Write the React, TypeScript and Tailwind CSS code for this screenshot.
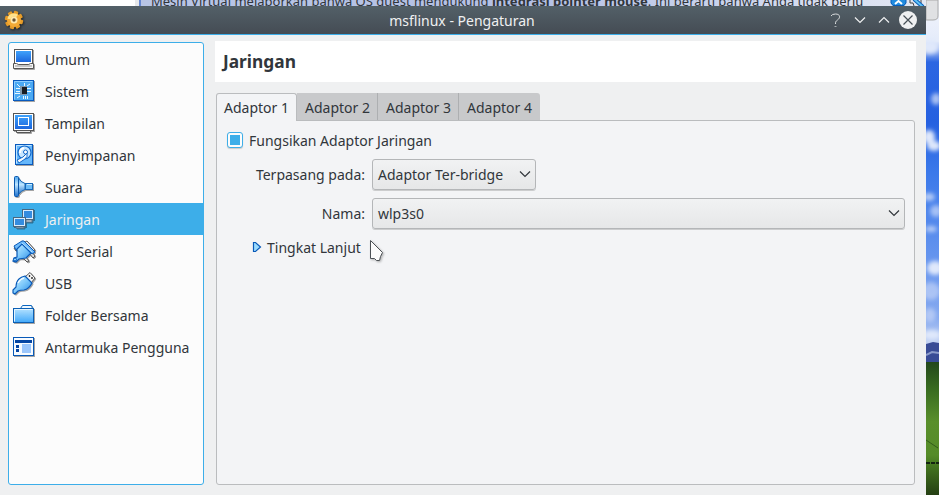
import React from "react";

const S = ({ children }: { children: React.ReactNode }) => (
  <svg width="24" height="24" viewBox="0 0 24 24" className="block shrink-0 drop-shadow-[1px_1px_0.5px_rgba(0,0,0,0.35)]">
    <defs>
      <linearGradient id="screen" x1="0" y1="0" x2="0" y2="1">
        <stop offset="0" stopColor="#3fa2fb" />
        <stop offset="1" stopColor="#1b66dd" />
      </linearGradient>
      <linearGradient id="light" x1="0" y1="0" x2="1" y2="1">
        <stop offset="0" stopColor="#d5f1ff" />
        <stop offset="0.500" stopColor="#7cc8fb" />
        <stop offset="1" stopColor="#2585e2" />
      </linearGradient>
      <linearGradient id="cone" x1="0" y1="0" x2="0" y2="1">
        <stop offset="0" stopColor="#4ba4ee" />
        <stop offset="0.400" stopColor="#bfe6ff" />
        <stop offset="1" stopColor="#1c70cd" />
      </linearGradient>
      <linearGradient id="folder" x1="0" y1="0" x2="0" y2="1">
        <stop offset="0" stopColor="#b5e2ff" />
        <stop offset="1" stopColor="#42a9fa" />
      </linearGradient>
    </defs>
    {children}
  </svg>
);

const General = () => (
  <S>
    <rect x="2.500" y="1.500" width="18" height="15" fill="#fff" stroke="#555" />
    <rect x="4" y="3" width="15" height="11" fill="url(#screen)" />
    <path d="M1.500 15.500h3l2 1h10l2-1h3v5h-20z" fill="#f4f4f4" stroke="#555" />
    <path d="M3 17h17v2H3z" fill="#c4c4c4" />
  </S>
);
const System = () => (
  <S>
    <rect x="1.500" y="0.500" width="20" height="20" fill="#4ba9f3" stroke="#0859bd" />
    <path d="M2.500 19.500v-18h18" fill="none" stroke="#8dcdff" />
    <path d="M4 8.500h4M4 11.500h4M3 13.500h5M15 8.500h4M15 11.500h4M11.500 16v3M13.500 16v3M15.500 16v3M12.500 3v3M15 6l3-2M5 18l3-2M5 4l3 3" stroke="#e7f6ff" />
    <rect x="8" y="6" width="7" height="9" fill="#8098ac" />
    <rect x="10" y="7" width="5" height="7" fill="#181d23" />
  </S>
);
const Display = () => (
  <S>
    <path d="M4.500 18.500h14v2h-14z" fill="#eee" stroke="#555" />
    <rect x="1.500" y="1.500" width="20" height="17" fill="#fff" stroke="#555" />
    <rect x="3" y="3" width="17" height="14" fill="url(#screen)" />
    <rect x="6.500" y="5.500" width="10" height="8" fill="none" stroke="#fff" />
  </S>
);
const Storage = () => (
  <S>
    <rect x="3.500" y="0.500" width="17" height="20" fill="#65b7fb" stroke="#0859bd" />
    <path d="M4.500 19.500v-18h15" fill="none" stroke="#bfe4ff" />
    <circle cx="12.500" cy="8.500" r="6.500" fill="#c7e6ff" stroke="#1268ca" strokeWidth="1.200" />
    <path d="M8 9a5 5 0 0 1 4-5" fill="none" stroke="#fff" strokeWidth="2" />
    <circle cx="13.500" cy="8" r="2" fill="#fff" stroke="#1268ca" />
    <path d="M15 9q1 4-2 6l-6 4-2-3 6-3z" fill="#f4faff" stroke="#1268ca" />
  </S>
);
const Audio = () => (
  <S>
    <path d="M6.500 2q2 4 6.500 5.500v6q-4 1-6.500 5z" fill="url(#cone)" stroke="#1768b7" />
    <rect x="2.500" y="0.500" width="4" height="20" rx="1" fill="url(#cone)" stroke="#0c58ad" />
    <rect x="13.500" y="7.500" width="7" height="6" fill="#6dbdf8" stroke="#1769b9" />
    <path d="M15 8.500h5" stroke="#c9eaff" />
  </S>
);
const Network = () => (
  <S>
    <path d="M14 12h6v2h-6zM4 19h8v1H4z" fill="#e8edf2" stroke="#58728a" />
    <rect x="10.500" y="1.500" width="11" height="10" fill="#d8edff" stroke="#49677f" />
    <rect x="12" y="3" width="8" height="7" fill="#348cdf" />
    <rect x="1.500" y="9.500" width="12" height="9" fill="#d8edff" stroke="#49677f" />
    <rect x="3" y="11" width="9" height="6" fill="#348cdf" />
  </S>
);
const Serial = () => (
  <S>
    <path d="M2 8l9-7 2 2-9 8zM13 2l2-1 8 9-2 3z" fill="#f4f4f4" stroke="#555" />
    <path d="M5 18l7 1 3 3 2-1-3-4zM17 13l4 5 2-2-3-4z" fill="#ddd" stroke="#555" />
    <path d="M2 6L10 1h2l11 11-3 2L10 5 4 10z" fill="#70bcfb" stroke="#0859b8" />
    <path d="M10 4l9 9-5 5-7 1-3 3-3-1 1-3 3-1V9z" fill="url(#light)" stroke="#0859b8" strokeWidth="1.200" />
    <path d="M10 3l10 9" stroke="#b9e3ff" />
    <circle cx="3" cy="19.500" r="1.500" fill="#8ed3ff" stroke="#0859b8" />
  </S>
);
const Usb = () => (
  <S>
    <path d="M13 5l5-4.500L23 6l-4 5z" fill="#f5f5f5" stroke="#555" />
    <path d="M17.500 3v2M19 6h2" stroke="#333" strokeWidth="1.300" />
    <path d="M13 4l7 7q-3 6-8 7-4 0-6 1l-3 3-2-1v-3l3-3q0-5 3-8 2-2 6-3z" fill="url(#light)" stroke="#0859b8" strokeWidth="1.200" />
    <path d="M6 11q2-4 6-5" stroke="#ecfaff" strokeWidth="1.500" fill="none" />
  </S>
);
const Folder = () => (
  <S>
    <path d="M8.500 4.500l2-3h9l1 3" fill="#eef8ff" stroke="#0b65bf" />
    <rect x="1.500" y="4.500" width="20" height="14" fill="url(#folder)" stroke="#0b5fb4" />
    <path d="M2.500 17.500v-12h18" fill="none" stroke="#e4f5ff" />
  </S>
);
const Interface = () => (
  <S>
    <rect x="1.500" y="1.500" width="20" height="18" fill="#f7fbff" stroke="#0859b8" />
    <path d="M3 4h17v3H3z" fill="#0646a3" />
    <path d="M4 9h3v3H4zM4 13h3v3H4z" fill="#0646a3" />
    <rect x="10" y="8" width="9" height="9" fill="#9bc6fb" />
  </S>
);

const categories: [string, () => React.JSX.Element][] = [
  ["Umum", General], ["Sistem", System], ["Tampilan", Display], ["Penyimpanan", Storage], ["Suara", Audio],
  ["Jaringan", Network], ["Port Serial", Serial], ["USB", Usb], ["Folder Bersama", Folder], ["Antarmuka Pengguna", Interface],
];

const Chevron = ({ up = false }: { up?: boolean }) => (
  <svg width="12" height="8" viewBox="0 0 12 8" fill="none" className="block shrink-0">
    <path d={up ? "M1 6.500l5-5 5 5" : "M1 1.500l5 5 5-5"} stroke="currentColor" strokeWidth="1.200" />
  </svg>
);

const Select = ({ label, width }: { label: string; width: string }) => (
  <button className={`flex h-[31px] items-center justify-between rounded-[3px] border border-[#b4b6b8] bg-linear-to-b from-[#f1f2f3] to-[#e6e7e8] pr-1 pl-[5px] text-left shadow-[0_1px_0_#cccdce] ${width}`}>
    <span>{label}</span><span className="-mt-[2px]"><Chevron /></span>
  </button>
);

const teeth = [0, 45, 90, 135, 180, 225, 270, 315];

const Gear = () => (
  <svg width="20" height="20" viewBox="0 0 20 20" className="block drop-shadow-[1px_1px_1px_rgba(0,0,0,0.6)]">
    <g fill="#e59b28">
      {teeth.map((a) => <rect key={a} x="7.800" y="0.800" width="4.400" height="5" rx="1" transform={`rotate(${a + 15} 10 10)`} />)}
    </g>
    <circle cx="10" cy="10" r="7" fill="#f3aa36" />
    <path d="M5 9a5 5 0 0 1 8-3" fill="none" stroke="#ffe28c" strokeWidth="3" />
    <circle cx="10" cy="10" r="3.500" fill="#ffe9ae" />
    <circle cx="10" cy="10" r="1.700" fill="#6b5536" />
  </svg>
);

export default function App() {
  return (
    <div className="flex h-[495px] w-[939px] overflow-hidden bg-[#eff0f1] font-['Noto_Sans',sans-serif] text-[14px] leading-5 text-[#31363b]">
      <div className="flex w-[926px] flex-col">
        <div className="flex h-[6px] shrink-0 overflow-hidden bg-white">
          <div className="ml-[135px] w-1 bg-[#e7e8ea]" />
          <div className="flex h-[6px] w-[787px] overflow-hidden border-l-2 border-[#6687d1] bg-linear-to-r from-[#b8c5e5] via-[#b4c0e5] to-[#e3e8f3]">
            <p className="-mt-[9px] ml-[10px] w-[711px] shrink-0 whitespace-nowrap text-[13px]">
              Mesin Virtual melaporkan bahwa OS guest mendukung <b>integrasi pointer mouse</b>. Ini berarti bahwa Anda tidak perlu
            </p>
            <svg width="38" height="6" viewBox="0 0 38 6" className="ml-[27px] shrink-0">
              <path d="M2 0h15v3l-2 3H4L2 3z" fill="#218cdf" />
              <path d="M2 0v3l2 2.500h11L17 3V0" fill="none" stroke="#075bb8" />
              <path d="M6 4l3.500-3L13 4" stroke="#fff" strokeWidth="2" fill="none" />
              <path d="M21 0v3h3l1 3M32 0v3" stroke="#454545" fill="none" />
              <path d="M25 -1l9 8" stroke="#075bb8" strokeWidth="4" />
              <path d="M25 -1l9 8" stroke="#5fc3f6" strokeWidth="2" />
            </svg>
          </div>
        </div>
        <header className="grid h-[29px] shrink-0 grid-cols-[1fr_auto_1fr] items-center border-b border-[#3daee9] bg-linear-to-b from-[#536068] to-[#454c54] text-[#eff0f1]">
          <div className="pl-1"><Gear /></div>
          <h1 className="mt-px -ml-[2px]">msflinux - Pengaturan</h1>
          <div className="flex items-center justify-end pr-[9px]">
            <svg width="11" height="15" viewBox="0 0 11 15" fill="none" className="mr-[13px]">
              <path d="M1 3q1-2 4.500-2c5 0 5 4 2 6-2 1.500-2 2-2 4" stroke="#d9dcdd" />
              <path d="M4.500 13.500h2" stroke="#a8aeb1" />
            </svg>
            <span className="mr-3"><Chevron /></span>
            <span className="mr-[9px]"><Chevron up /></span>
            <svg width="18" height="18" viewBox="0 0 18 18"><circle cx="9" cy="9" r="9" fill="#eff0f1" /><path d="M4.500 4.500l9 9m0-9l-9 9" stroke="#475057" strokeWidth="1.200" /></svg>
          </div>
        </header>
        <main className="flex min-h-0 flex-1 pt-[6px] pr-[10px] pb-[9px] pl-2">
          <nav className="mt-px h-[443px] w-[196px] shrink-0 rounded-[3px] border border-[#3daee9] bg-[#fcfcfc]">
            {categories.map(([name, Icon], i) => (
              <div key={name} className={`flex h-8 items-center pl-[3px] ${i === 5 ? "bg-[#3daee9] text-[#eff0f1]" : ""}`}>
                <span className="pt-[2px]"><Icon /></span><span className="mt-[2px] ml-[9px] whitespace-nowrap">{name}</span>
              </div>
            ))}
          </nav>
          <section className="ml-[11px] flex w-[701px] flex-col">
            <h2 className="h-[41px] shrink-0 bg-white pt-2 pl-2 text-[17.330px] leading-6 font-bold">Jaringan</h2>
            <div className="mt-[11px] ml-px flex h-[27px] shrink-0">
              {[1, 2, 3, 4].map((n) => (
                <div key={n} className={`w-[81px] text-center ${n === 1 ? "z-10 h-7 rounded-t-[3px] border border-b-0 border-[#babcbe] bg-[#f3f4f6] pt-1" : `h-7 bg-[#c8c9cb] pt-[5px] ${n < 4 ? "border-r border-[#adafb1] pl-px" : "rounded-tr-[3px]"}`}`}>Adaptor {n}</div>
              ))}
            </div>
            <div className="ml-px h-[365px] w-[699px] rounded-b-[3px] rounded-tr-[3px] border border-[#babcbe] bg-[#f3f4f6] pt-[11px] pl-[10px]">
              <label className="flex h-4 items-center gap-[6px]">
                <span className="flex size-4 items-center justify-center rounded-[3px] border border-[#3daee9] bg-[#fcfcfc] shadow-[0_1px_1px_#ccc]"><span className="size-[10px] bg-[#3daee9]" /></span>
                <span className="mt-px">Fungsikan Adaptor Jaringan</span>
              </label>
              <div className="mt-[11px] grid grid-cols-[138px_auto] items-center gap-x-[7px] gap-y-2">
                <label className="text-right">Terpasang pada:</label><Select label="Adaptor Ter-bridge" width="w-[164px]" />
                <label className="text-right">Nama:</label><Select label="wlp3s0" width="w-[533px]" />
              </div>
              <div className="mt-[7px] flex items-center pl-[25px]">
                <svg width="10" height="12" viewBox="0 0 10 12" className="mr-[5px] shrink-0"><path d="M1.500 1.500h2l5 4.500-5 4.500h-2z" fill="#9bdcff" stroke="#0859b8" strokeWidth="1.200" /></svg>
                <span className="mt-px">Tingkat Lanjut</span>
                <svg width="15" height="22" viewBox="0 0 15 22" className="mt-1 -mb-1 ml-[9px] drop-shadow-[1px_1px_1px_rgba(0,0,0,0.3)]"><path d="M.5.500v18h4l2 2h3l1-4 2-4z" fill="#fcfcfc" stroke="#4d5256" strokeWidth="1" /></svg>
              </div>
            </div>
          </section>
        </main>
      </div>
      <svg width="13" height="495" viewBox="0 0 13 495" className="block shrink-0">
        <defs>
          <linearGradient id="sky" gradientUnits="userSpaceOnUse" x1="0" y1="0" x2="0" y2="345">
            <stop offset="0" stopColor="#f3f5fc" /><stop offset="0.120" stopColor="#e4ebfa" /><stop offset="0.180" stopColor="#2c66e2" /><stop offset="0.350" stopColor="#2560e0" /><stop offset="0.500" stopColor="#3b79ea" /><stop offset="0.750" stopColor="#6695ee" /><stop offset="0.920" stopColor="#85a9ef" /><stop offset="1" stopColor="#c8d6f3" />
          </linearGradient>
          <linearGradient id="grass" x1="0" y1="0" x2="0" y2="1">
            <stop offset="0" stopColor="#23481b" /><stop offset="0.200" stopColor="#386b20" /><stop offset="0.450" stopColor="#598f2b" /><stop offset="0.700" stopColor="#558b28" /><stop offset="0.800" stopColor="#41701e" /><stop offset="1" stopColor="#253f13" />
          </linearGradient>
          <filter id="soft"><feGaussianBlur stdDeviation="2" /></filter>
        </defs>
        <rect width="13" height="345" fill="url(#sky)" />
        <g fill="#dfe8fb" filter="url(#soft)">
          <ellipse cx="4" cy="47" rx="9" ry="7" /><ellipse cx="10" cy="99" rx="5" ry="6" opacity="0.700" />
          <ellipse cx="3" cy="137" rx="6" ry="7" /><ellipse cx="8" cy="146" rx="7" ry="5" />
          <ellipse cx="3" cy="197" rx="6" ry="4" opacity="0.700" /><ellipse cx="10" cy="211" rx="6" ry="6" opacity="0.600" />
          <ellipse cx="5" cy="229" rx="6" ry="3" opacity="0.700" /><ellipse cx="9" cy="268" rx="8" ry="7" />
          <ellipse cx="5" cy="291" rx="9" ry="9" opacity="0.500" /><ellipse cx="4" cy="315" rx="6" ry="7" opacity="0.500" /><ellipse cx="6" cy="335" rx="9" ry="5" />
        </g>
        <path d="M0 344l7-2 6 1v21H0z" fill="#394c96" /><path d="M0 355l6-3 7 1" fill="none" stroke="#8c9ccb" strokeWidth="2" />
        <rect y="362" width="13" height="133" fill="url(#grass)" />
        <path d="M0 440l6 4 6 4" fill="none" stroke="#325c1a" /><path d="M0 463h13" stroke="#132410" strokeWidth="2" strokeDasharray="4 1" />
        <path d="M0 0h12v16q0 4-5 4H0z" fill="#e0e1e3" stroke="#aaa" />
      </svg>
    </div>
  );
}
